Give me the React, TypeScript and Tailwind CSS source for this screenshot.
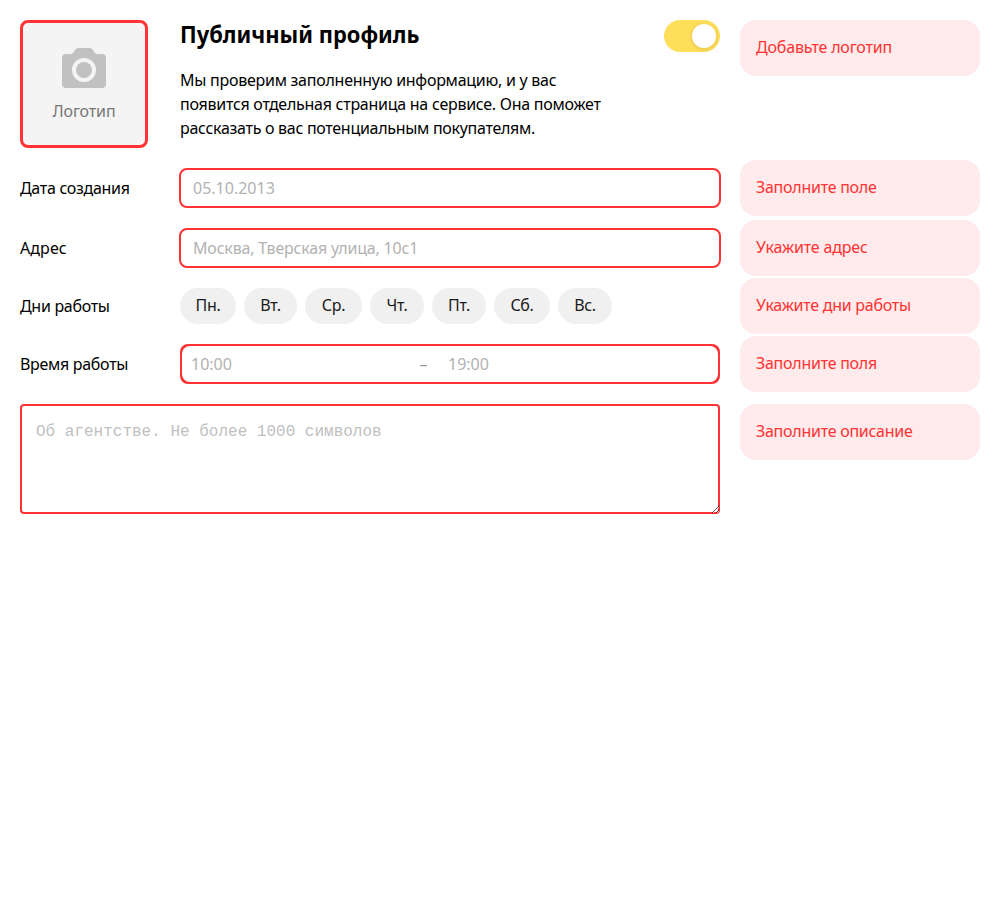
import type { ReactNode } from 'react';

const days = ['Пн.', 'Вт.', 'Ср.', 'Чт.', 'Пт.', 'Сб.', 'Вс.'];
const dayWidths = ['w-14', 'w-[53px]', 'w-[57px]', 'w-[54px]', 'w-[54px]', 'w-14', 'w-[54px]'];

function ErrorNote({ children, tracking = 'tracking-[-0.26px]' }: { children: ReactNode; tracking?: string }) {
  return (
    <div className={`h-14 w-60 shrink-0 rounded-[16px] bg-[#ffebeb] px-4 pt-4 pb-4 leading-[23px] text-[#ff3333] ${tracking}`}>
      {children}
    </div>
  );
}

type RowProps = {
  label: string;
  labelTracking?: string;
  error: string;
  errorTracking?: string;
  height: string;
  children: ReactNode;
};

function Row({ label, labelTracking = 'tracking-[-0.3px]', error, errorTracking, height, children }: RowProps) {
  return (
    <div className={`flex items-center gap-5 ${height}`}>
      <div className="flex w-[700px] shrink-0 items-center">
        <div className={`w-40 shrink-0 leading-6 ${labelTracking}`}>{label}</div>
        <div className="flex-1">{children}</div>
      </div>
      <ErrorNote tracking={errorTracking}>{error}</ErrorNote>
    </div>
  );
}

function CameraIcon() {
  return (
    <svg className="block h-10 w-11" viewBox="0 0 44 40">
      <path
        fill="#c1c1c1"
        fillRule="evenodd"
        d="M4 6h5Q10.300 6 11 5L13.500 1.500Q14.600 0 16.500 0h11Q29.400 0 30.500 1.500L33 5Q33.700 6 35 6h5a4 4 0 0 1 4 4v26a4 4 0 0 1-4 4H4a4 4 0 0 1-4-4V10a4 4 0 0 1 4-4ZM22 10a12 12 0 1 0 0 24a12 12 0 1 0 0-24Z"
      />
      <circle cx="22" cy="22" r="8" fill="#c1c1c1" />
    </svg>
  );
}

export default function App() {
  return (
    <div className="flex min-h-[900px] w-[1000px] flex-col gap-5 bg-white p-5 font-['Noto_Sans',sans-serif] text-base text-black">
      <div className="flex h-32 items-start gap-5">
        <div className="flex w-[700px] gap-8">
          <div className="flex h-32 w-32 shrink-0 flex-col items-center rounded-[8px] border-[3px] border-[#ff3333] bg-[#f4f4f4] pt-[25px]">
            <CameraIcon />
            <span className="mt-[11px] leading-6 tracking-[-0.15px] text-[#777]">Логотип</span>
          </div>
          <div className="flex flex-1 flex-col">
            <div className="flex h-8 items-start justify-between">
              <h1 className="origin-left scale-x-[0.912] text-[24px] leading-[28px] font-bold whitespace-nowrap">Публичный профиль</h1>
              <div className="flex h-8 w-14 items-center justify-end rounded-full bg-[#ffde5a] p-1">
                <div className="h-6 w-6 rounded-full bg-white shadow-[0_1px_4px_rgba(0,0,0,0.13)]" />
              </div>
            </div>
            <p className="mt-4 leading-6 tracking-[-0.26px] whitespace-nowrap">
              Мы проверим заполненную информацию, и у вас
              <br />
              появится отдельная страница на сервисе. Она поможет
              <br />
              <span className="tracking-[-0.29px]">рассказать о вас потенциальным покупателям.</span>
            </p>
          </div>
        </div>
        <ErrorNote tracking="tracking-[-0.17px]">Добавьте логотип</ErrorNote>
      </div>

      <Row label="Дата создания" error="Заполните поле" height="h-10">
        <div className="-mx-px flex h-10 items-center rounded-[8px] border-2 border-[#ff3333] px-3 text-[#b2b2b2]">05.10.2013</div>
      </Row>
      <Row label="Адрес" labelTracking="tracking-[0.1px]" error="Укажите адрес" errorTracking="tracking-[-0.17px]" height="h-10">
        <div className="-mx-px flex h-10 items-center rounded-[8px] border-2 border-[#ff3333] px-3 tracking-[-0.18px] text-[#b2b2b2]">
          Москва, Тверская улица, 10с1
        </div>
      </Row>
      <Row label="Дни работы" error="Укажите дни работы" height="h-9">
        <div className="flex gap-2">
          {days.map((d, i) => (
            <div key={d} className={`h-9 rounded-full bg-[#f0f0f0] text-center leading-[35px] tracking-[-0.3px] text-[#1a1a1a] ${dayWidths[i]}`}>
              {d}
            </div>
          ))}
        </div>
      </Row>
      <Row label="Время работы" error="Заполните поля" height="h-10">
        <div className="h-10 rounded-[8px] bg-[#ff3333] p-0.5">
          <div className="flex h-9 items-center rounded-[8px] bg-white pl-[9px] text-[#b2b2b2]">
            <span className="w-[228.5px]">10:00</span>
            <span className="w-[28.5px] text-[#999]">–</span>
            <span>19:00</span>
          </div>
        </div>
      </Row>

      <div className="flex items-start gap-5">
        <textarea
          className="block h-[110px] w-[700px] shrink-0 resize rounded-[4px] bg-white px-4 pt-[19px] pb-4 font-['Liberation_Mono',monospace] leading-[18px] shadow-[inset_0_0_0_2px_#ff3333] outline-none placeholder:text-[#c0c0c0]"
          placeholder="Об агентстве. Не более 1000 символов"
        />
        <ErrorNote>Заполните описание</ErrorNote>
      </div>
    </div>
  );
}
